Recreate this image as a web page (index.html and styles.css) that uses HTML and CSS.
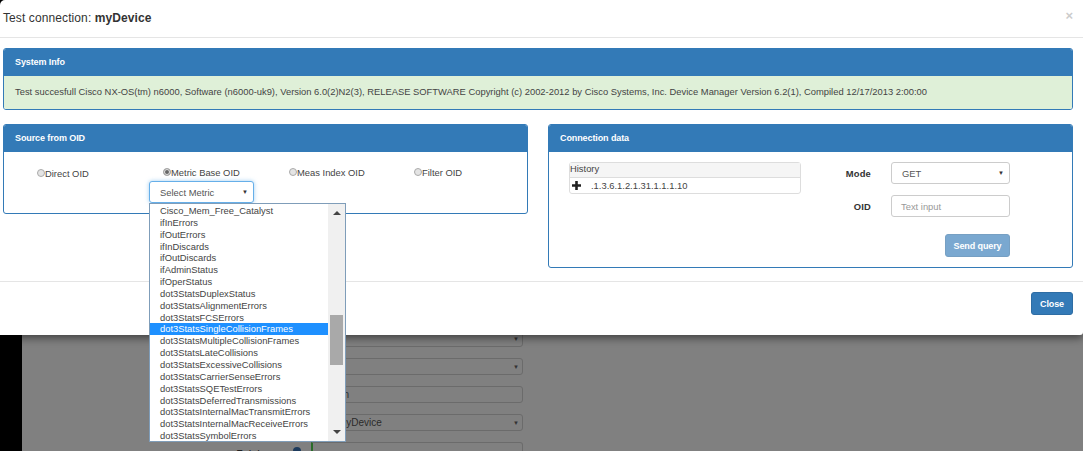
FILE: index.html
```html
<!DOCTYPE html>
<html lang="en">

<head>
  <meta charset="UTF-8">
  <title>Test connection</title>
  <link rel="stylesheet" href="styles.css">
</head>

<body>
  <!-- page behind the modal -->
  <div class="backPage">
    <div class="sideBar"></div>
    <div class="backForm">
      <div class="backRow"><div class="backBox"><span class="caret">▼</span></div></div>
      <div class="backRow"><div class="backBox"><span class="backText">v.</span><span class="caret">▼</span></div></div>
      <div class="backRow"><div class="backBox"><span class="backText">on</span></div></div>
      <div class="backRow"><div class="backBox"><span class="backText">myDevice</span><span class="caret">▼</span></div></div>
      <div class="backRow backLast">
        <span class="backLabel">Entat</span>
        <span class="backHelp"></span>
        <div class="backBox backGreen"></div>
      </div>
    </div>
  </div>

  <div class="modal">
    <div class="modalHead">
      <div class="modalTitle">Test connection: <b>myDevice</b></div>
      <div class="modalClose">×</div>
    </div>

    <div class="modalBody">
      <div class="panel">
        <div class="panelHead">System Info</div>
        <div class="panelBody panelOk">Test succesfull Cisco NX-OS(tm) n6000, Software (n6000-uk9), Version 6.0(2)N2(3), RELEASE SOFTWARE Copyright (c) 2002-2012 by Cisco Systems, Inc. Device Manager Version 6.2(1), Compiled 12/17/2013 2:00:00</div>
      </div>

      <div class="panelCols">
        <div class="panel panelSource">
          <div class="panelHead">Source from OID</div>
          <div class="panelBody sourceBody">
            <label class="radioItem radioDirect"><span class="radio"></span>Direct OID</label>
            <div class="radioMetric">
              <label class="radioItem"><span class="radio radioOn"></span>Metric Base OID</label>
              <div class="selectBox selectFocus">Select Metric<span class="caret">▼</span></div>
            </div>
            <label class="radioItem radioMeas"><span class="radio"></span>Meas Index OID</label>
            <label class="radioItem radioFilter"><span class="radio"></span>Filter OID</label>
          </div>
        </div>

        <div class="panel panelConn">
          <div class="panelHead">Connection data</div>
          <div class="panelBody connBody">
            <div class="history">
              <div class="historyHead">History</div>
              <div class="historyRow">
                <svg class="plus" width="9" height="9" viewBox="0 0 9 9"><path d="M3.2 0h2.6v3.2H9v2.6H5.8V9H3.2V5.8H0V3.2h3.2z" fill="#222"/></svg>
                <span>.1.3.6.1.2.1.31.1.1.1.10</span>
              </div>
            </div>
            <div class="connForm">
              <div class="connRow">
                <span class="connLabel">Mode</span>
                <div class="selectBox selectMode">GET<span class="caret">▼</span></div>
              </div>
              <div class="connRow">
                <span class="connLabel">OID</span>
                <div class="selectBox inputOid">Text input</div>
              </div>
              <div class="connSend"><button class="btn btnOff">Send query</button></div>
            </div>
          </div>
        </div>
      </div>
    </div>

    <div class="modalFoot"><button class="btn">Close</button></div>
  </div>

  <!-- open list of the select, hangs over modal and page -->
  <div class="dropList">
    <ul class="dropItems">
      <li>Cisco_Mem_Free_Catalyst</li>
      <li>ifInErrors</li>
      <li>ifOutErrors</li>
      <li>ifInDiscards</li>
      <li>ifOutDiscards</li>
      <li>ifAdminStatus</li>
      <li>ifOperStatus</li>
      <li>dot3StatsDuplexStatus</li>
      <li>dot3StatsAlignmentErrors</li>
      <li>dot3StatsFCSErrors</li>
      <li class="dropActive">dot3StatsSingleCollisionFrames</li>
      <li>dot3StatsMultipleCollisionFrames</li>
      <li>dot3StatsLateCollisions</li>
      <li>dot3StatsExcessiveCollisions</li>
      <li>dot3StatsCarrierSenseErrors</li>
      <li>dot3StatsSQETestErrors</li>
      <li>dot3StatsDeferredTransmissions</li>
      <li>dot3StatsInternalMacTransmitErrors</li>
      <li>dot3StatsInternalMacReceiveErrors</li>
      <li>dot3StatsSymbolErrors</li>
    </ul>
    <div class="scrollBar">
      <span class="scrollUp"></span>
      <div class="scrollTrack"><div class="scrollThumb"></div></div>
      <span class="scrollDown"></span>
    </div>
  </div>
</body>

</html>
```

FILE: styles.css
```css
* {
  margin: 0;
  padding: 0;
  box-sizing: border-box;
  list-style: none;
}

html, body {
  height: 455px;
  overflow: hidden;
}

body {
  position: relative;
  background: #fff;
  font-family: "Liberation Sans", Arial, sans-serif;
  font-size: 9.4px;
  color: #444;
}

/* page behind */
.backPage {
  display: flex;
  height: 451px;
  overflow: hidden;
  background: #808080;
}
.sideBar {
  width: 22px;
  background: #000;
}
.backForm {
  width: 501px;
  padding-top: 330px;
}
.backRow {
  display: flex;
  justify-content: flex-end;
  height: 28px;
}
.backBox {
  display: flex;
  align-items: center;
  width: 218px;
  height: 17px;
  padding: 0 3px 0 32px;
  border: 1px solid #6b6b6b;
  border-radius: 3px;
  font-size: 10px;
  color: #2b2b2b;
}
.backLast {
  align-items: flex-start;
}
.backLabel {
  margin-right: 33px;
  padding-top: 5px;
  font-weight: bold;
  color: #222;
}
.backHelp {
  width: 8px;
  height: 8px;
  margin: 5px 10px 0 0;
  border-radius: 50%;
  background: #1c3a5c;
}
.backGreen {
  width: 212px;
  border-left: 2px solid #2a6b2a;
  border-radius: 0 3px 3px 0;
}
.caret {
  margin-left: auto;
  font-size: 6px;
  color: #333;
}

/* modal */
.modal {
  position: absolute;
  left: 0;
  top: 0;
  width: 1083px;
  height: 335px;
  background: #fff;
  border-top-left-radius: 5px;
  border-bottom-right-radius: 3px;
  box-shadow: 0 3px 9px rgba(0, 0, 0, 0.5);
}
.modalHead {
  display: flex;
  justify-content: space-between;
  height: 38px;
  padding: 11px 10px 0 3px;
  border-bottom: 1px solid #e5e5e5;
}
.modalTitle {
  font-size: 12px;
  line-height: 15px;
  letter-spacing: 0.1px;
  color: #333;
}
.modalClose {
  font-size: 13px;
  line-height: 10px;
  color: #ccc;
  font-weight: bold;
}
.modalBody {
  padding: 10px 10px 0 3px;
}
.panel {
  border: 1px solid #337ab7;
  border-radius: 3px;
  overflow: hidden;
  background: #fff;
}
.panelHead {
  height: 27px;
  padding: 0 11px;
  background: #337ab7;
  color: #fff;
  font-weight: bold;
  font-size: 9px;
  letter-spacing: -0.1px;
  line-height: 26px;
}
.panelOk {
  height: 33px;
  padding: 0 11px;
  background: #dff0d8;
  line-height: 32px;
  white-space: nowrap;
}
.panelCols {
  display: flex;
  justify-content: space-between;
  margin-top: 14px;
}
.panelSource {
  width: 525px;
  height: 90px;
}
.panelConn {
  width: 525px;
  height: 144px;
}
.sourceBody {
  display: flex;
  height: 61px;
  padding-top: 14px;
}
.radioItem {
  display: flex;
  align-items: center;
  height: 12px;
}
.radio {
  width: 8px;
  height: 8px;
  border: 1px solid #aaa;
  border-radius: 50%;
  background: #e4e4e4;
}
.radioOn {
  background: #666;
  box-shadow: inset 0 0 0 1px #e4e4e4;
}
.radioDirect {
  width: 113px;
  margin: 1px 0 0 33px;
}
.radioMetric {
  width: 139px;
}
.radioMeas {
  width: 125px;
}
.radioMetric .radioItem {
  margin-left: 13px;
}
.selectBox {
  display: flex;
  align-items: center;
  height: 22px;
  padding: 0 5px 0 10px;
  border: 1px solid #ccc;
  border-radius: 3px;
  background: #fff;
  color: #555;
}
.selectFocus {
  width: 105px;
  margin: 3px 0 0 -1px;
  border-color: #66afe9;
  box-shadow: 0 0 4px rgba(102, 175, 233, 0.6);
}
.connBody {
  display: flex;
  height: 115px;
  padding: 10px 0 0 20px;
}
.history {
  width: 232px;
  height: 32px;
  border: 1px solid #ddd;
  border-radius: 3px;
}
.historyHead {
  height: 15px;
  background: #f5f5f5;
  border-bottom: 1px solid #ddd;
  line-height: 12px;
}
.historyRow {
  display: flex;
  align-items: center;
  gap: 10px;
  height: 15px;
  padding-left: 2px;
}
.connForm {
  width: 211px;
  margin-left: 25px;
}
.connRow {
  display: flex;
  align-items: center;
  height: 22px;
  margin-bottom: 11px;
}
.connLabel {
  width: 45px;
  margin-right: 20px;
  text-align: right;
  font-weight: bold;
  letter-spacing: 0.2px;
  color: #333;
}
.selectMode, .inputOid {
  width: 119px;
}
.inputOid {
  color: #999;
  padding-left: 9px;
}
.connSend {
  display: flex;
  justify-content: flex-end;
  width: 184px;
  margin-top: 17px;
}
.btn {
  height: 23px;
  padding: 0;
  border: 1px solid #2e6da4;
  border-radius: 3px;
  background: #337ab7;
  color: #fff;
  font-family: inherit;
  font-weight: bold;
  font-size: 9px;
  letter-spacing: -0.1px;
  white-space: nowrap;
}
.btnOff {
  width: 65px;
  opacity: 0.65;
}
.modalFoot {
  display: flex;
  justify-content: flex-end;
  margin-top: 13px;
  padding: 10px 10px 0 0;
  border-top: 1px solid #e5e5e5;
}
.modalFoot .btn {
  width: 42px;
}

/* open select list */
.dropList {
  position: absolute;
  left: 149px;
  top: 203px;
  display: flex;
  width: 197px;
  height: 239px;
  border: 1px solid #7f9db9;
  background: #fff;
}
.dropItems {
  flex: 1;
  padding-top: 1px;
}
.dropItems li {
  height: 11.85px;
  padding-left: 10px;
  line-height: 12px;
  white-space: nowrap;
}
.dropItems .dropActive {
  background: #1e90ff;
  color: #fff;
}
.scrollBar {
  display: flex;
  flex-direction: column;
  width: 17px;
  background: #f0f0f0;
}
.scrollUp, .scrollDown {
  flex: none;
  width: 0;
  height: 0;
  margin: 0 auto;
  border-left: 4px solid transparent;
  border-right: 4px solid transparent;
}
.scrollUp {
  margin-top: 7px;
  border-bottom: 4px solid #444;
}
.scrollDown {
  margin-bottom: 7px;
  border-top: 4px solid #444;
}
.scrollTrack {
  flex: 1;
  padding: 100px 2px 0 2px;
}
.scrollThumb {
  height: 50px;
  background: #a9a9a9;
}
```
